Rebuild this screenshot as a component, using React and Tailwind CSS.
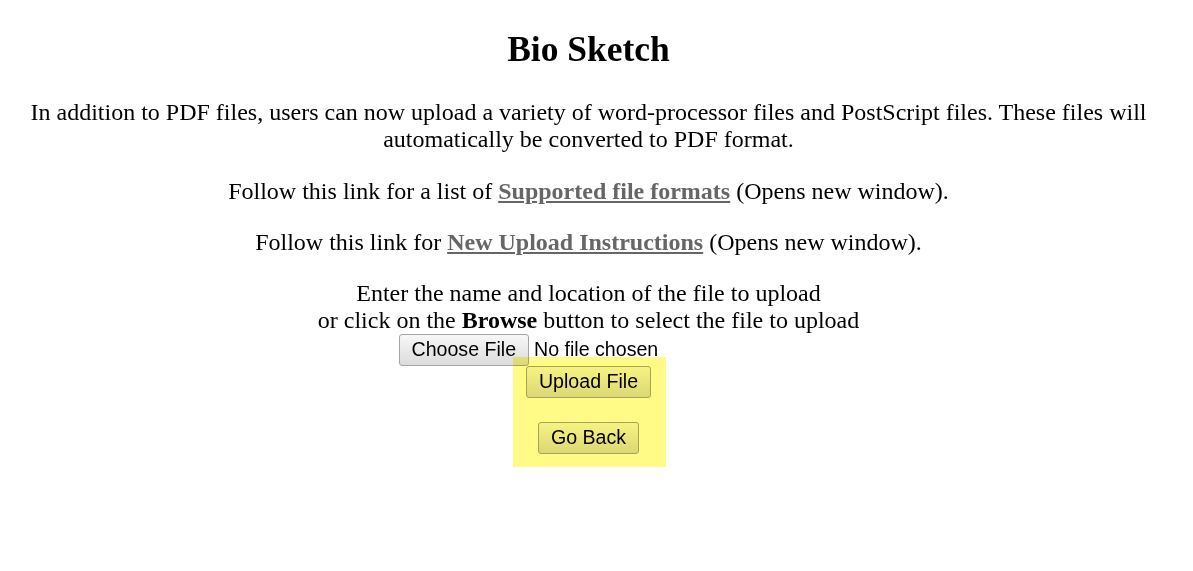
export default function App() {
  const serif = { fontFamily: '"Liberation Serif", "Times New Roman", serif' };
  const btn =
    "h-[32px] px-[12px] border border-[#a6a6a6] rounded-[3px] bg-gradient-to-b from-[#f7f7f7] to-[#dcdcdc] text-[19.6px] text-black leading-none";
  return (
    <div className="relative w-[1193px] h-[571px] bg-white overflow-hidden">
      <div
        className="w-[1177px] flex flex-col items-center text-black text-[24px] leading-[27px] text-center"
        style={serif}
      >
        <h1 className="mt-[29px] h-[40px] leading-[40px] text-[35.5px] font-bold">Bio Sketch</h1>
        <p className="mt-[30px] px-[10px]">
          In addition to PDF files, users can now upload a variety of word-processor files and PostScript files. These files will
          <br />
          automatically be converted to PDF format.
        </p>
        <p className="mt-[25px]">
          Follow this link for a list of{" "}
          <a className="font-bold text-[#666666] underline">Supported file formats</a> (Opens new window).
        </p>
        <p className="mt-[24px]">
          Follow this link for{" "}
          <a className="font-bold text-[#666666] underline">New Upload Instructions</a> (Opens new window).
        </p>
        <p className="mt-[24px]">
          Enter the name and location of the file to upload
          <br />
          or click on the <b>Browse</b> button to select the file to upload
        </p>
        <div className="w-[380px] flex items-center" style={{ fontFamily: '"Liberation Sans", Arial, sans-serif' }}>
          <button className={btn + " h-[31px]"}>Choose File</button>
          <span className="ml-[5px] text-[19.6px] leading-none">No file chosen</span>
        </div>
        <div className="flex flex-col items-center" style={{ fontFamily: '"Liberation Sans", Arial, sans-serif' }}>
          <button className={btn}>Upload File</button>
          <button className={btn + " mt-[24px]"}>Go Back</button>
        </div>
      </div>
      <div className="absolute left-[513px] top-[357px] w-[153px] h-[110px] bg-[#fffb86] mix-blend-multiply pointer-events-none" />
    </div>
  );
}
